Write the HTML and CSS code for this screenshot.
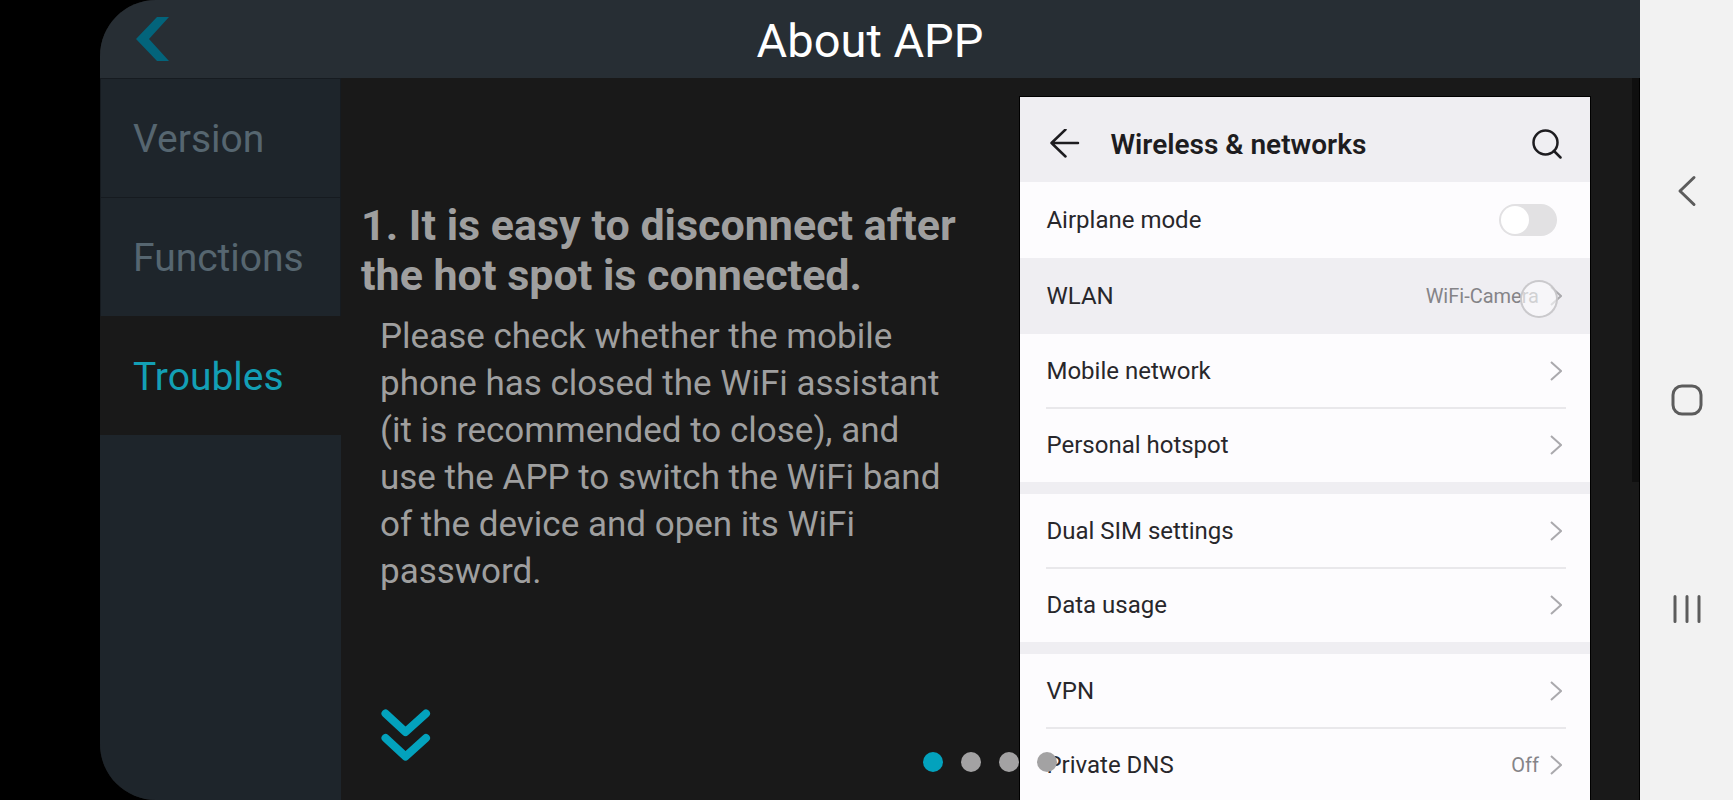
FILE: index.html
```html
<!DOCTYPE html>
<html lang="en">
<head>
  <meta charset="UTF-8">
  <meta name="viewport" content="width=device-width, initial-scale=1.0">
  <title>About APP</title>
  <link rel="stylesheet" href="styles.css">
</head>
<body>
  <div class="app">
    <header class="top-bar">
      <button class="back-btn" aria-label="Back">
        <svg width="33" height="44" viewBox="0 0 33 44"><path d="M21 0h12L13 22l20 22H21L0 22z" fill="#03647b"/></svg>
      </button>
      <h1>About APP</h1>
    </header>

    <div class="app-body">
      <nav class="sidebar">
        <button class="tab">Version</button>
        <button class="tab">Functions</button>
        <button class="tab active">Troubles</button>
      </nav>

      <main class="content">
        <section class="trouble">
          <h2>1. It is easy to disconnect after the hot spot is connected.</h2>
          <p>Please check whether the mobile phone has closed the WiFi assistant (it is recommended to close), and use the APP to switch the WiFi band of the device and open its WiFi password.</p>
          <button class="more-btn" aria-label="Next">
            <svg width="50" height="52" viewBox="0 0 50 52" fill="none" stroke="#03a2bd" stroke-width="8" stroke-linecap="round" stroke-linejoin="round"><path d="M4.500 4.500L24.500 23L45 4.500M4.500 29L24.500 47.500L45 29"/></svg>
          </button>
        </section>

        <section class="phone">
          <header class="phone-header">
            <button aria-label="Back">
              <svg width="30" height="30" viewBox="0 0 30 30" fill="none" stroke="#1d1c20" stroke-width="2.500" stroke-linecap="round" stroke-linejoin="round"><path d="M28 14H1.500M15.500 0.500L1.500 14L15.500 27.500"/></svg>
            </button>
            <h3>Wireless &amp; networks</h3>
            <button aria-label="Search">
              <svg width="30" height="30" viewBox="0 0 30 30" fill="none" stroke="#1d1c20" stroke-width="2.500" stroke-linecap="round"><circle cx="13.500" cy="13.500" r="12"/><path d="M22 22L28.500 28.500"/></svg>
            </button>
          </header>

          <div class="group">
            <label class="row switch-row">Airplane mode <input type="checkbox" class="switch"></label>
            <a class="row pressed" href="#">WLAN
              <span class="value">WiFi-Camera</span>
              <svg class="arrow" width="12" height="20" viewBox="0 0 12 20"><path d="M1 1l10 9l-10 9"/></svg>
              <span class="touch"></span>
            </a>
            <a class="row" href="#">Mobile network
              <svg class="arrow" width="12" height="20" viewBox="0 0 12 20"><path d="M1 1l10 9l-10 9"/></svg>
            </a>
            <a class="row line" href="#">Personal hotspot
              <svg class="arrow" width="12" height="20" viewBox="0 0 12 20"><path d="M1 1l10 9l-10 9"/></svg>
            </a>
          </div>

          <div class="group">
            <a class="row" href="#">Dual SIM settings
              <svg class="arrow" width="12" height="20" viewBox="0 0 12 20"><path d="M1 1l10 9l-10 9"/></svg>
            </a>
            <a class="row line" href="#">Data usage
              <svg class="arrow" width="12" height="20" viewBox="0 0 12 20"><path d="M1 1l10 9l-10 9"/></svg>
            </a>
          </div>

          <div class="group">
            <a class="row" href="#">VPN
              <svg class="arrow" width="12" height="20" viewBox="0 0 12 20"><path d="M1 1l10 9l-10 9"/></svg>
            </a>
            <a class="row line" href="#">Private DNS
              <span class="value">Off</span>
              <svg class="arrow" width="12" height="20" viewBox="0 0 12 20"><path d="M1 1l10 9l-10 9"/></svg>
            </a>
          </div>
        </section>

        <div class="dots">
          <span class="dot current"></span>
          <span class="dot"></span>
          <span class="dot"></span>
          <span class="dot"></span>
        </div>
        <div class="scrollbar"></div>
      </main>
    </div>
  </div>

  <nav class="system-bar">
    <button aria-label="Back">
      <svg width="32" height="32" viewBox="0 0 32 32"><path d="M23 2.500L9 16L23 29.500"/></svg>
    </button>
    <button aria-label="Home">
      <svg width="32" height="32" viewBox="0 0 32 32"><rect x="2" y="2" width="28" height="28" rx="9"/></svg>
    </button>
    <button aria-label="Recent apps">
      <svg width="32" height="32" viewBox="0 0 32 32"><path d="M4 3.500V28.500M16 3.500V28.500M28 3.500V28.500"/></svg>
    </button>
  </nav>
</body>
</html>
```
FILE: styles.css
```css
* {
  box-sizing: border-box;
}

body {
  display: flex;
  height: 100vh;
  margin: 0;
  padding-left: 100px;
  background-color: #000;
  font-family: Roboto, sans-serif;
  overflow: hidden;
}

h1, h2, h3, p {
  margin: 0;
}

button {
  display: block;
  padding: 0;
  border: none;
  background: none;
  font-family: inherit;
  cursor: pointer;
}

svg {
  display: block;
}

.app {
  flex: 1;
  display: flex;
  flex-direction: column;
  min-width: 0;
  border-radius: 56px 0 0 56px;
  background-color: #191919;
  overflow: hidden;
}

.top-bar {
  display: grid;
  grid-template-columns: 1fr auto 1fr;
  align-items: center;
  height: 78px;
  padding: 0 36px;
  background-color: #272e34;
}

.back-btn {
  justify-self: start;
}

.top-bar h1 {
  padding-top: 4px;
  color: #fff;
  font-size: 47px;
  font-weight: 400;
  line-height: 56px;
}

.app-body {
  flex: 1;
  display: flex;
  min-height: 0;
}

.sidebar {
  width: 241px;
  background-color: #1e252b;
}

.tab {
  width: 100%;
  height: 119px;
  padding: 2px 32px 0;
  border: 1px solid #161b20;
  border-bottom: none;
  color: #566670;
  font-size: 39px;
  text-align: left;
}

.tab.active {
  border-color: #191919;
  background-color: #191919;
  color: #139fb5;
}

.content {
  position: relative;
  flex: 1;
  display: grid;
  grid-template-columns: 22fr 19fr;
  min-width: 0;
  padding: 19px 49px 0 20px;
  border-right: 1px solid #000;
}

.trouble {
  padding: 103px 60px 0 0;
  color: #9f9f9f;
}

.trouble h2 {
  font-size: 43px;
  font-weight: 700;
  line-height: 50px;
}

.trouble p {
  padding: 13px 14px 0 19px;
  font-size: 35px;
  line-height: 47px;
}

.more-btn {
  margin: 114px 0 0 20px;
}

.phone {
  height: 703px;
  background-color: #efeef2;
  outline: 1px solid #000;
  color: #28272b;
  overflow: hidden;
}

.phone-header {
  display: flex;
  align-items: center;
  gap: 30px;
  height: 85px;
  padding: 9px 28px 0 30px;
}

.phone-header h3 {
  flex: 1;
  color: #1d1c20;
  font-size: 28px;
  font-weight: 600;
}

.group {
  margin-bottom: 12px;
  background-color: #fdfcfe;
}

.row {
  position: relative;
  display: flex;
  align-items: center;
  gap: 11px;
  height: 74px;
  padding: 0 28px 0 26px;
  color: inherit;
  font-size: 24px;
  text-decoration: none;
}

.switch-row {
  height: 76px;
  padding-right: 33px;
}

.row.pressed {
  height: 76px;
  background-color: #efeef2;
}

/* divider between the rows of one group */
.row.line::before {
  content: "";
  position: absolute;
  top: -1px;
  left: 26px;
  right: 24px;
  height: 2px;
  background-color: #e9e8eb;
}

.switch {
  appearance: none;
  width: 58px;
  height: 32px;
  margin: 0 0 0 auto;
  padding: 2px;
  border-radius: 16px;
  background-color: #e2e1e3;
}

.switch::before {
  content: "";
  display: block;
  width: 28px;
  height: 28px;
  border-radius: 50%;
  background-color: #fff;
}

.switch:checked::before {
  margin-left: auto;
}

.value {
  margin-left: auto;
  color: #858488;
  font-size: 20px;
}

.arrow {
  margin-left: auto;
  fill: none;
  stroke: #aaa9ad;
  stroke-width: 2;
}

.value + .arrow {
  margin-left: 0;
}

.touch {
  position: absolute;
  top: 22px;
  right: 32px;
  width: 38px;
  height: 38px;
  border: 2px solid rgba(190, 189, 193, 0.8);
  border-radius: 50%;
  background-color: rgba(250, 250, 252, 0.65);
}

.dots {
  position: absolute;
  bottom: 28px;
  left: 0;
  right: 0;
  display: flex;
  justify-content: center;
  gap: 18px;
}

.dot {
  width: 20px;
  height: 20px;
  border-radius: 50%;
  background-color: #a3a2a3;
}

.dot.current {
  background-color: #03a2bd;
}

.scrollbar {
  position: absolute;
  top: 0;
  right: 0;
  width: 7px;
  height: 56%;
  background-color: #0f0f0f;
}

.system-bar {
  display: flex;
  flex-direction: column;
  justify-content: center;
  align-items: center;
  gap: 177px;
  width: 93px;
  background-color: #f2f2f2;
}

.system-bar svg {
  fill: none;
  stroke: #5c5c5c;
  stroke-width: 3;
  stroke-linecap: round;
  stroke-linejoin: round;
}
```
